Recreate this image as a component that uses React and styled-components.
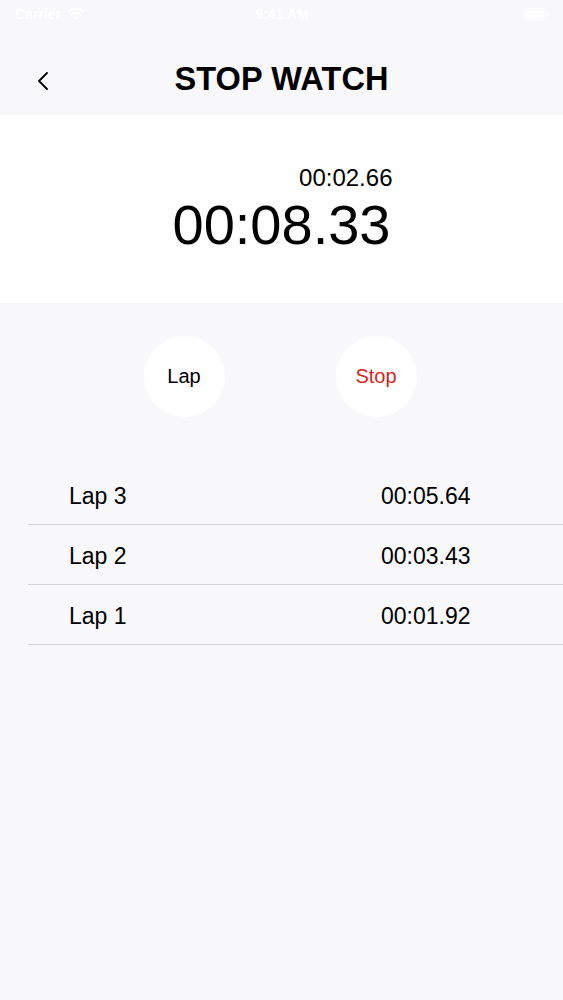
import React from "react";
import styled, { createGlobalStyle } from "styled-components";

const GlobalStyle = createGlobalStyle`
  html, body { margin: 0; padding: 0; background: #f8f7fa; }
  body { font-family: "Liberation Sans", Arial, sans-serif; color: #000; }
  * { box-sizing: border-box; }
`;

const Page = styled.div`
  width: 563px;
  min-height: 1000px;
  background: #f8f7fa;
  display: flex;
  flex-direction: column;
`;

const StatusBar = styled.div`
  height: 44px;
  display: grid;
  grid-template-columns: 1fr auto 1fr;
  align-items: start;
  padding: 6px 14px 0 15px;
  color: #ffffff;
  font-size: 14px;
  font-weight: 700;
`;

const StatusLeft = styled.div`
  display: flex;
  align-items: center;
  gap: 6px;
`;

const StatusRight = styled.div`
  display: flex;
  justify-content: flex-end;
  padding-top: 2px;
`;

const Header = styled.header`
  height: 71px;
  display: grid;
  grid-template-columns: 1fr auto 1fr;
  align-items: center;
`;

const BackButton = styled.button`
  justify-self: start;
  margin-left: 33px;
  margin-top: 2px;
  width: 20px;
  height: 24px;
  padding: 0;
  border: none;
  background: none;
  display: flex;
  align-items: center;
  justify-content: center;
`;

const Title = styled.h1`
  margin: 0;
  font-size: 32.5px;
  line-height: 71px;
  font-weight: 700;
  letter-spacing: 0.1px;
`;

const TimerPanel = styled.section`
  background: #ffffff;
  padding: 49px 0 46px;
  display: flex;
  justify-content: center;
`;

const TimerBlock = styled.div`
  display: flex;
  flex-direction: column;
  align-items: flex-end;
`;

const LapTime = styled.div`
  font-size: 24px;
  line-height: 28px;
  margin-right: -2px;
`;

const MainTime = styled.div`
  font-size: 56px;
  line-height: 65px;
`;

const Controls = styled.div`
  display: flex;
  justify-content: center;
  gap: 111px;
  padding-top: 33px;
  margin-left: -3px;
`;

const CircleButton = styled.button`
  width: 81px;
  height: 81px;
  border-radius: 50%;
  border: none;
  background: #ffffff;
  font-family: "Liberation Sans", Arial, sans-serif;
  font-size: 20px;
  color: ${(p) => (p.$danger ? "#d6261e" : "#000000")};
  display: flex;
  align-items: center;
  justify-content: center;
  padding: 0;
`;

const LapList = styled.ul`
  list-style: none;
  margin: 48px 0 0 28px;
  padding: 0;
`;

const LapRow = styled.li`
  height: 60px;
  display: grid;
  grid-template-columns: 312px 1fr;
  align-items: center;
  padding: 3px 0 0 41px;
  border-bottom: 1px solid #d3d2d7;
  font-size: 23px;
`;

const WifiIcon = () => (
  <svg width="18" height="13" viewBox="0 0 18 13" fill="#fff">
    <path d="M9 12.5l2.2-2.7a3.4 3.4 0 0 0-4.4 0z" />
    <path d="M9 6.2c1.8 0 3.4.6 4.6 1.7l1.3-1.6A8.9 8.9 0 0 0 9 4.1a8.9 8.9 0 0 0-5.9 2.2l1.3 1.6C5.6 6.8 7.2 6.2 9 6.2z" />
    <path d="M9 2c2.9 0 5.5 1 7.5 2.8L17.8 3.2A12.9 12.9 0 0 0 9 0 12.9 12.9 0 0 0 .2 3.2l1.3 1.6C3.5 3 6.1 2 9 2z" />
  </svg>
);

const BatteryIcon = () => (
  <svg width="26" height="12" viewBox="0 0 26 12" fill="none">
    <rect x="0.5" y="0.5" width="22" height="11" rx="3" stroke="#fff" />
    <rect x="2" y="2" width="19" height="8" rx="1.5" fill="#fff" />
    <path d="M24 4v4a2 2 0 0 0 0-4z" fill="#fff" />
  </svg>
);

const Chevron = () => (
  <svg width="12" height="18" viewBox="0 0 12 18" fill="none">
    <path d="M10 1L2 9l8 8" stroke="#000" strokeWidth="1.8" strokeLinecap="round" strokeLinejoin="round" />
  </svg>
);

const laps = [
  { name: "Lap 3", time: "00:05.64" },
  { name: "Lap 2", time: "00:03.43" },
  { name: "Lap 1", time: "00:01.92" },
];

export default function App() {
  return (
    <Page>
      <GlobalStyle />
      <StatusBar>
        <StatusLeft>
          <span>Carrier</span>
          <WifiIcon />
        </StatusLeft>
        <span>9:41 AM</span>
        <StatusRight>
          <BatteryIcon />
        </StatusRight>
      </StatusBar>
      <Header>
        <BackButton aria-label="Back">
          <Chevron />
        </BackButton>
        <Title>STOP WATCH</Title>
        <div />
      </Header>
      <TimerPanel>
        <TimerBlock>
          <LapTime>00:02.66</LapTime>
          <MainTime>00:08.33</MainTime>
        </TimerBlock>
      </TimerPanel>
      <Controls>
        <CircleButton>Lap</CircleButton>
        <CircleButton $danger>Stop</CircleButton>
      </Controls>
      <LapList>
        {laps.map((l) => (
          <LapRow key={l.name}>
            <span>{l.name}</span>
            <span>{l.time}</span>
          </LapRow>
        ))}
      </LapList>
    </Page>
  );
}
